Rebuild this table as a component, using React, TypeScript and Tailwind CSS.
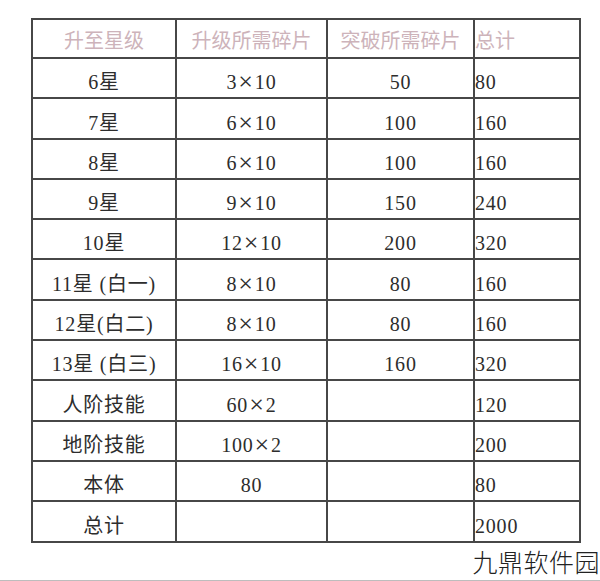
const rows: [string, string, string, string][] = [
  ["6星", "3×10", "50", "80"],
  ["7星", "6×10", "100", "160"],
  ["8星", "6×10", "100", "160"],
  ["9星", "9×10", "150", "240"],
  ["10星", "12×10", "200", "320"],
  ["11星 (白一)", "8×10", "80", "160"],
  ["12星(白二)", "8×10", "80", "160"],
  ["13星 (白三)", "16×10", "160", "320"],
  ["人阶技能", "60×2", "", "120"],
  ["地阶技能", "100×2", "", "200"],
  ["本体", "80", "", "80"],
  ["总计", "", "", "2000"],
];

const headers = ["升至星级", "升级所需碎片", "突破所需碎片", "总计"];

// wider multiplication sign, like the source sheet
function Cell({ text }: { text: string }) {
  if (!text.includes("×")) return <>{text}</>;
  const [a, b] = text.split("×");
  return (
    <>
      {a}
      <span className="inline-block text-[26px] leading-[20px] font-light mx-[1px] align-[-1px]">×</span>
      {b}
    </>
  );
}

export default function App() {
  return (
    <div className="w-[600px] h-[581px] bg-white font-['Liberation_Serif','Noto_Sans_CJK_SC',serif] text-[#2d2d2d] flex flex-col">
      <table className="ml-[31px] mt-[18px] w-[548px] table-fixed border-collapse border-2 border-[#474747]">
        <colgroup>
          <col className="w-[144px]" />
          <col className="w-[151px]" />
          <col className="w-[147px]" />
          <col className="w-[106px]" />
        </colgroup>
        <thead>
          <tr className="h-[39px]">
            {headers.map((h, i) => (
              <th
                key={h + i}
                className={`border-2 border-[#474747] font-normal text-[20px] leading-[20px] align-bottom pb-[6px] text-[#cdb3ba] ${
                  i === 3 ? "text-left pl-0" : "text-center"
                }`}
              >
                {h}
              </th>
            ))}
          </tr>
        </thead>
        <tbody>
          {rows.map((r, ri) => (
            <tr key={ri} className="h-[40.3px]">
              {r.map((c, ci) => (
                <td
                  key={ci}
                  className={`border-2 border-[#474747] text-[20px] leading-[20px] tracking-[0.8px] align-bottom pb-[5px] ${
                    ci === 3 ? "text-left pl-0" : "text-center"
                  }`}
                >
                  <Cell text={c} />
                </td>
              ))}
            </tr>
          ))}
        </tbody>
      </table>
      <div className="flex justify-end mt-[3px]">
        <span className="font-['Noto_Sans_CJK_SC',sans-serif] font-light text-[25px] leading-[30px] text-[#222] tracking-[0.5px]">
          九鼎软件园
        </span>
      </div>
      <div className="mt-auto h-px bg-[#bdbdbd]" />
    </div>
  );
}
